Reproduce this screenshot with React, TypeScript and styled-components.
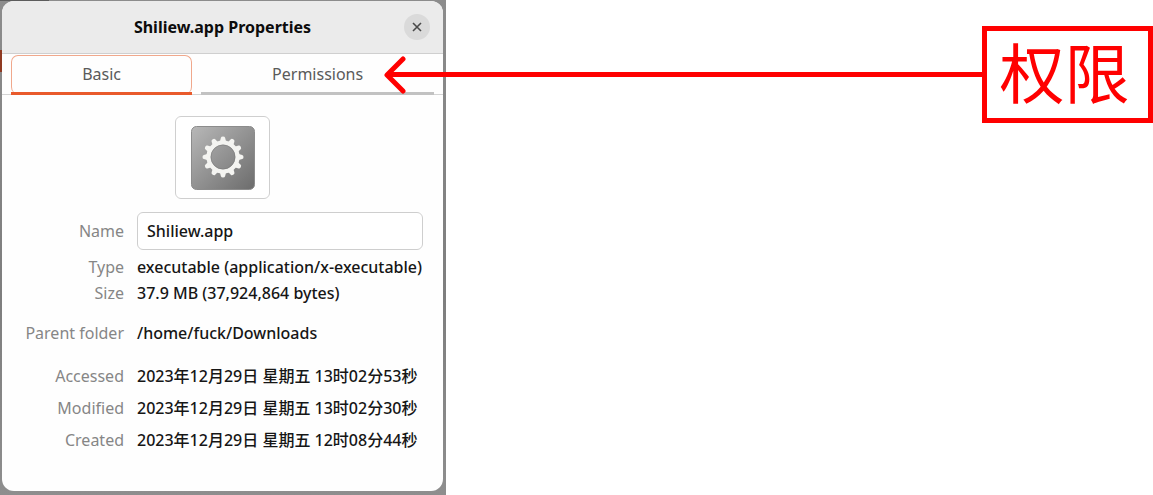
import React from 'react';
import styled, { createGlobalStyle } from 'styled-components';

const GlobalStyle = createGlobalStyle`
  * { box-sizing: border-box; }
  body {
    margin: 0;
    background: #fff;
    color: #161616;
    font-family: "Noto Sans", "Noto Sans CJK SC", sans-serif;
    font-size: 16px;
  }
`;

const Page = styled.main`
  position: relative;
  display: flex;
  min-height: 100vh;
`;

const Desktop = styled.div`
  display: flex;
  width: 446px;
  padding: 1px 3px 4px 2px;
  background:
    linear-gradient(#8f3a22, #8f3a22) 0 50px / 2px 22px no-repeat,
    linear-gradient(#5c5c5c, #5c5c5c) 0 0 / 49px 1px no-repeat,
    linear-gradient(#8c8c8c, #7e7e7e 60%, #8e8e8e);
`;

const Dialog = styled.section`
  flex: 1;
  display: flex;
  flex-direction: column;
  overflow: hidden;
  border-radius: 12px;
  background: #fefefe;
`;

const TitleBar = styled.header`
  display: grid;
  grid-template-columns: 26px 1fr 26px;
  align-items: center;
  height: 53px;
  padding: 0 13px;
  border-bottom: 1px solid #cfcfcf;
  background: #ebebeb;
`;

const Title = styled.h1`
  grid-column: 2;
  margin: 0;
  color: #0c0c0c;
  font-size: 16px;
  font-weight: 700;
  line-height: 22px;
  text-align: center;
`;

const CloseButton = styled.button`
  display: grid;
  place-items: center;
  width: 26px;
  height: 26px;
  padding: 0;
  border: 0;
  border-radius: 50%;
  background: #dadada;
`;

const TabBar = styled.div`
  display: flex;
  gap: 9px;
  height: 41px;
  padding: 0 9px;
  border-bottom: 1px solid #d4d4d4;
`;

const Tab = styled.button<{ $active?: boolean; $grow: number }>`
  flex: ${p => p.$grow} 1 0;
  position: relative;
  margin: 1px 0 0;
  padding: 0 0 3px;
  border: 1px solid ${p => (p.$active ? '#f0a88c' : 'transparent')};
  border-bottom: 0;
  border-radius: 7px;
  background: transparent;
  color: #5a5a5a;
  font: inherit;

  &::after {
    content: '';
    position: absolute;
    right: -1px;
    bottom: -1px;
    left: -1px;
    height: 3px;
    background: ${p => (p.$active ? '#e95a2c' : '#c2c2c2')};
  }
`;

const Body = styled.form`
  display: flex;
  flex-direction: column;
  padding: 21px 20px 30px;
`;

const IconButton = styled.button`
  display: grid;
  place-items: center;
  align-self: center;
  width: 95px;
  height: 83px;
  margin-bottom: 13px;
  padding: 0;
  border: 1px solid #cfcfcf;
  border-radius: 6px;
  background: #fff;
`;

const Row = styled.div<{ $height: number }>`
  display: grid;
  grid-template-columns: 102px 1fr;
  column-gap: 13px;
  align-items: center;
  min-height: ${p => p.$height}px;
  line-height: 22px;
  white-space: nowrap;
`;

const labelStyle = `
  color: #868686;
  text-align: right;
`;

const Label = styled.label`${labelStyle}`;
const Term = styled.dt`${labelStyle}`;

const Value = styled.dd`
  margin: 0;
  font-weight: 500;
`;

const NameInput = styled.input`
  width: 100%;
  height: 38px;
  padding: 0 9px;
  border: 1px solid #cecece;
  border-radius: 6px;
  background: #fff;
  color: inherit;
  font: inherit;
  font-weight: 500;
`;

const Group = styled.dl<{ $gap: number }>`
  margin: ${p => p.$gap}px 0 0;
`;

const Annotation = styled.aside`
  position: absolute;
  top: 26px;
  right: 0;
  left: 384px;
  display: flex;
  align-items: center;
  pointer-events: none;
`;

const Shaft = styled.div`
  flex: 1;
  height: 5px;
  margin-left: -18px;
  background: #f00;
`;

const Callout = styled.strong`
  display: grid;
  place-items: center;
  width: 171px;
  height: 97px;
  padding: 0 6px 8px 0;
  border: 5px solid #f00;
  background: #fff;
  color: #f00;
  font-family: "Noto Sans CJK SC", sans-serif;
  font-size: 65px;
  font-weight: 400;
  line-height: 79px;
`;

const GearIcon = () => (
  <svg width="64" height="64" viewBox="0 0 64 64" aria-hidden="true">
    <defs>
      <linearGradient id="tile" x1="0" y1="0" x2="1" y2="1">
        <stop offset="0" stopColor="#b8b8b8" />
        <stop offset="1" stopColor="#6c6c6c" />
      </linearGradient>
    </defs>
    <rect x="0.5" y="0.5" width="63" height="63" rx="5" fill="url(#tile)" stroke="#8c8c8c" />
    <g transform="translate(32 31)">
      <g fill="#f4f4f1">
        {Array.from({ length: 12 }, (_, i) => (
          <path key={i} d="M-3.2 -15 L-2.1 -19.2 Q-1.8 -20.5 0 -20.5 Q1.8 -20.5 2.1 -19.2 L3.2 -15 Z" transform={`rotate(${i * 30})`} />
        ))}
      </g>
      <circle r="14.4" fill="none" stroke="#f4f4f1" strokeWidth="4.4" />
      <circle r="12.1" fill="none" stroke="#777" strokeWidth="0.6" />
    </g>
  </svg>
);

const summary = [
  ['Type', 'executable (application/x-executable)'],
  ['Size', '37.9 MB (37,924,864 bytes)'],
];
const location = [['Parent folder', '/home/fuck/Downloads']];
const dates = [
  ['Accessed', '2023年12月29日 星期五 13时02分53秒'],
  ['Modified', '2023年12月29日 星期五 13时02分30秒'],
  ['Created', '2023年12月29日 星期五 12时08分44秒'],
];

const Facts = ({ items, gap, rowHeight }: { items: string[][]; gap: number; rowHeight: number }) => (
  <Group $gap={gap}>
    {items.map(([term, value]) => (
      <Row key={term} $height={rowHeight}>
        <Term>{term}</Term>
        <Value>{value}</Value>
      </Row>
    ))}
  </Group>
);

export default function App() {
  return (
    <>
      <GlobalStyle />
      <Page>
        <Desktop>
          <Dialog role="dialog" aria-labelledby="title">
            <TitleBar>
              <Title id="title">Shiliew.app Properties</Title>
              <CloseButton type="button" aria-label="Close">
                <svg width="10" height="10" viewBox="0 0 10 10" aria-hidden="true">
                  <path d="M1 1l8 8M9 1l-8 8" stroke="#4a4a4a" strokeWidth="1.6" />
                </svg>
              </CloseButton>
            </TitleBar>
            <TabBar role="tablist">
              <Tab type="button" role="tab" aria-selected="true" $active $grow={181}>Basic</Tab>
              <Tab type="button" role="tab" aria-selected="false" $grow={233}>Permissions</Tab>
            </TabBar>
            <Body>
              <IconButton type="button" aria-label="Change icon">
                <GearIcon />
              </IconButton>
              <Row $height={38}>
                <Label htmlFor="name">Name</Label>
                <NameInput id="name" defaultValue="Shiliew.app" />
              </Row>
              <Facts items={summary} gap={4} rowHeight={26} />
              <Facts items={location} gap={14} rowHeight={26} />
              <Facts items={dates} gap={14} rowHeight={32} />
            </Body>
          </Dialog>
        </Desktop>
        <Annotation>
          <svg width="22" height="38" viewBox="0 0 22 38" aria-hidden="true">
            <path d="M19 3L3 19l16 16" fill="none" stroke="#f00" strokeWidth="5" strokeLinecap="round" strokeLinejoin="round" />
          </svg>
          <Shaft />
          <Callout>权限</Callout>
        </Annotation>
      </Page>
    </>
  );
}
